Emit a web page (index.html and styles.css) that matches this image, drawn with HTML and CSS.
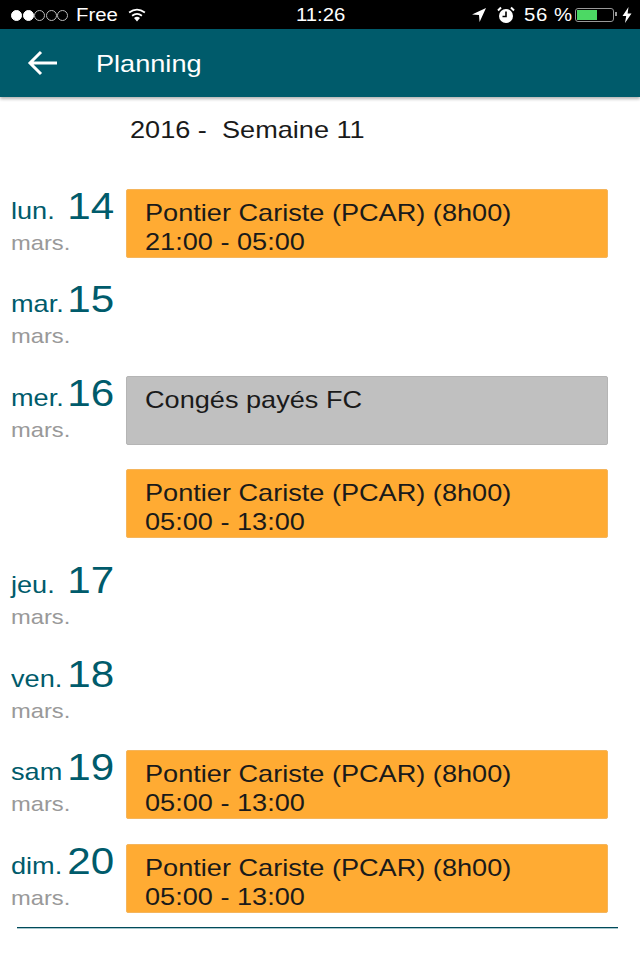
FILE: index.html
```html
<!DOCTYPE html>
<html lang="fr">
<head>
    <meta charset="UTF-8">
    <meta name="viewport" content="width=device-width, initial-scale=1.0">
    <title>Planning</title>
    <link rel="stylesheet" href="styles.css">
</head>
<body>

    <div class="status-bar">
        <div class="status-left">
            <span class="signal">
                <i class="dot on"></i><i class="dot on"></i><i class="dot"></i><i class="dot"></i><i class="dot"></i>
            </span>
            <span class="carrier wide">Free</span>
            <svg class="wifi" width="20" height="14" viewBox="0 0 22 16">
                <path d="M11 15.5 L7.6 11.4 Q11 8.8 14.4 11.4 Z" fill="#fff"/>
                <path d="M5.4 8.9 Q11 4.6 16.6 8.9" fill="none" stroke="#fff" stroke-width="2"/>
                <path d="M2 5.2 Q11 -1.6 20 5.2" fill="none" stroke="#fff" stroke-width="2"/>
            </svg>
        </div>
        <div class="status-time wide">11:26</div>
        <div class="status-right">
            <svg class="arrow" width="16" height="16" viewBox="0 0 16 16">
                <path d="M15 1 L1 7.6 L8 8 L8.6 15 Z" fill="#fff"/>
            </svg>
            <svg class="alarm" width="18" height="18" viewBox="0 0 18 18">
                <circle cx="9" cy="10" r="7" fill="#fff"/>
                <path d="M9 5.5 V10.5 H5.5" fill="none" stroke="#000" stroke-width="1.6"/>
                <path d="M1 4.5 L4 1.5 M17 4.5 L14 1.5" stroke="#fff" stroke-width="2"/>
            </svg>
            <span class="percent wide">56 %</span>
            <span class="battery"><span class="battery-fill"></span></span>
            <svg class="bolt" width="10" height="16" viewBox="0 0 10 16">
                <path d="M6.5 0 L0.5 9 H4.2 L3 16 L9.5 6.5 H5.6 Z" fill="#fff"/>
            </svg>
        </div>
    </div>

    <header class="app-header">
        <svg class="back" width="32" height="26" viewBox="0 0 32 26">
            <path d="M30 13 H3 M14 2 L3 13 L14 24" fill="none" stroke="#fff" stroke-width="3"/>
        </svg>
        <span class="app-title wide">Planning</span>
    </header>

    <div class="week"><span class="wide">2016 -&nbsp; Semaine 11</span></div>

    <main class="planning">
        <div class="day">
            <div class="date">
                <div class="date-top"><span class="weekday wide">lun.</span><span class="num">14</span></div>
                <div class="month wide">mars.</div>
            </div>
            <div class="card work"><span class="wide">Pontier Cariste (PCAR) (8h00)<br>21:00 - 05:00</span></div>
        </div>
        <div class="day">
            <div class="date">
                <div class="date-top"><span class="weekday wide">mar.</span><span class="num">15</span></div>
                <div class="month wide">mars.</div>
            </div>
        </div>
        <div class="day">
            <div class="date">
                <div class="date-top"><span class="weekday wide">mer.</span><span class="num">16</span></div>
                <div class="month wide">mars.</div>
            </div>
            <div class="card leave"><span class="wide">Congés payés FC</span></div>
        </div>
        <div class="day">
            <div class="date"></div>
            <div class="card work"><span class="wide">Pontier Cariste (PCAR) (8h00)<br>05:00 - 13:00</span></div>
        </div>
        <div class="day">
            <div class="date">
                <div class="date-top"><span class="weekday wide">jeu.</span><span class="num">17</span></div>
                <div class="month wide">mars.</div>
            </div>
        </div>
        <div class="day">
            <div class="date">
                <div class="date-top"><span class="weekday wide">ven.</span><span class="num">18</span></div>
                <div class="month wide">mars.</div>
            </div>
        </div>
        <div class="day">
            <div class="date">
                <div class="date-top"><span class="weekday wide">sam</span><span class="num">19</span></div>
                <div class="month wide">mars.</div>
            </div>
            <div class="card work"><span class="wide">Pontier Cariste (PCAR) (8h00)<br>05:00 - 13:00</span></div>
        </div>
        <div class="day">
            <div class="date">
                <div class="date-top"><span class="weekday wide">dim.</span><span class="num">20</span></div>
                <div class="month wide">mars.</div>
            </div>
            <div class="card work"><span class="wide">Pontier Cariste (PCAR) (8h00)<br>05:00 - 13:00</span></div>
        </div>
    </main>

    <div class="rule"></div>

</body>
</html>
```

FILE: styles.css
```css
body {
    font-family: 'Liberation Sans', Arial, sans-serif;
    background-color: #fff;
    color: #1a1a1a;
    margin: 0;
    padding: 0;
}
/* the whole screenshot is stretched sideways, so the text is too */
.wide {
    display: inline-block;
    transform: scaleX(1.13);
    transform-origin: left center;
}
.status-bar {
    display: flex;
    justify-content: space-between;
    align-items: center;
    position: relative;
    height: 29px;
    box-sizing: border-box;
    padding: 1px 8px 0 11px;
    background-color: #000;
    color: #fff;
    font-size: 18px;
}
.status-left {
    display: flex;
    align-items: center;
}
.signal {
    display: flex;
    gap: 0.5px;
}
.dot {
    width: 11px;
    height: 11px;
    box-sizing: border-box;
    border: 1px solid #bbb;
    border-radius: 50%;
}
.dot.on {
    background-color: #fff;
    border-color: #fff;
}
.carrier {
    width: 41px;
    margin-left: 8px;
}
.wifi {
    margin-left: 10px;
}
.status-time {
    position: absolute;
    left: 296px;
    top: 5px;
}
.status-right {
    display: flex;
    align-items: center;
}
.alarm {
    margin-left: 10px;
}
.percent {
    width: 46px;
    margin-left: 9px;
    letter-spacing: 0.5px;
}
.battery {
    display: block;
    position: relative;
    width: 35px;
    height: 10px;
    margin-left: 5px;
    border: 1px solid #999;
    border-radius: 3px;
    padding: 1px;
}
.battery::after {
    content: "";
    position: absolute;
    right: -4px;
    top: 3px;
    width: 2px;
    height: 4px;
    background-color: #999;
}
.battery-fill {
    display: block;
    width: 20px;
    height: 10px;
    background-color: #4cd964;
}
.bolt {
    margin-left: 8px;
}
.app-header {
    display: flex;
    align-items: center;
    height: 68px;
    padding-left: 27px;
    background-color: #005b6b;
    box-shadow: 0 2px 3px rgba(0, 0, 0, 0.3);
}
.app-title {
    margin: 2px 0 0 37px;
    color: #fff;
    font-size: 24px;
}
.week {
    padding: 19px 0 0 130px;
    height: 71px;
    box-sizing: border-box;
    font-size: 24px;
    line-height: 28px;
}
.planning {
    display: flex;
    flex-direction: column;
    padding: 20.6px 32px 0 11px;
}
.day {
    display: flex;
    height: 93.6px;
}
.date {
    width: 115px;
    flex-shrink: 0;
}
.date-top {
    display: flex;
    justify-content: space-between;
    align-items: baseline;
    width: 103px;
    height: 38px;
    margin-top: -1px;
    color: #005b6b;
}
.weekday {
    font-size: 24px;
}
.num {
    display: inline-block;
    font-size: 37px;
    line-height: 38px;
    transform: scaleX(1.14);
    transform-origin: right center;
}
.month {
    display: block;
    margin-top: 5px;
    color: #999;
    font-size: 21px;
}
.card {
    flex: 1;
    height: 69px;
    box-sizing: border-box;
    padding: 8px 18px;
    border-radius: 2px;
    font-size: 24px;
    line-height: 29px;
}
.work {
    background-color: #ffab33;
    border: 1px solid #f5b55c;
}
.leave {
    background-color: #c0c0c0;
    border: 1px solid #b5b5b5;
}
.rule {
    height: 1px;
    margin: -10.4px 22px 0 17px;
    background-color: #004a5a;
    border-bottom: 1px solid #a9c7ce;
}
```
